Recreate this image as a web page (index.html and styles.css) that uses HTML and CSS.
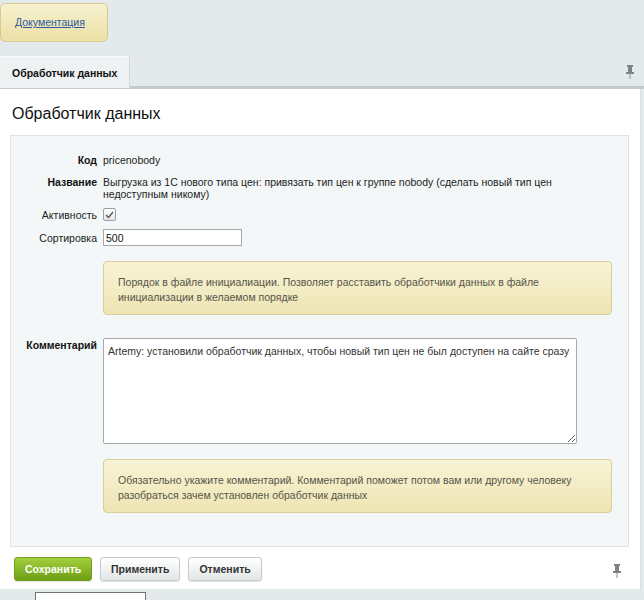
FILE: index.html
```html
<!DOCTYPE html>
<html lang="ru">
<head>
    <meta charset="UTF-8">
    <title>Обработчик данных</title>
    <link rel="stylesheet" href="styles.css">
</head>
<body>

    <div class="top-bar">
        <div class="doc-btn"><a href="#">Документация</a></div>
    </div>

    <div class="tabs">
        <div class="tab">Обработчик данных</div>
        <span class="pin">
            <svg width="10" height="14" viewBox="0 0 10 14"><path d="M2 0h6v2H7v5h2v2H1V7h2V2H2z" fill="#7d8487"/><rect x="4.5" y="9" width="1" height="5" fill="#8d9497"/></svg>
        </span>
    </div>

    <div class="panel">
        <h2 class="panel-title">Обработчик данных</h2>

        <div class="edit-box">
            <div class="row row-code">
                <div class="label">Код</div>
                <div class="value">pricenobody</div>
            </div>
            <div class="row row-name">
                <div class="label">Название</div>
                <div class="value">Выгрузка из 1С нового типа цен: привязать тип цен к группе nobody (сделать новый тип цен недоступным никому)</div>
            </div>
            <div class="row row-active">
                <div class="label normal">Активность</div>
                <div class="value"><span class="check">
                    <svg width="9" height="8" viewBox="0 0 9 8"><path d="M1 4l2.5 2.5L8 1" fill="none" stroke="#555" stroke-width="1.3"/></svg>
                </span></div>
            </div>
            <div class="row row-sort">
                <div class="label normal">Сортировка</div>
                <div class="value"><input type="text" class="sort-input" value="500"></div>
            </div>
            <div class="row row-hint">
                <div></div>
                <div class="hint">Порядок в файле инициалиации. Позволяет расставить обработчики данных в файле инициализации в желаемом порядке</div>
            </div>
            <div class="row row-comment">
                <div class="label">Комментарий</div>
                <div class="value"><textarea class="comment">Artemy: установили обработчик данных, чтобы новый тип цен не был доступен на сайте сразу</textarea></div>
            </div>
            <div class="row row-hint2">
                <div></div>
                <div class="hint">Обязательно укажите комментарий. Комментарий поможет потом вам или другому человеку разобраться зачем установлен обработчик данных</div>
            </div>
        </div>

        <div class="buttons">
            <button class="btn btn-save">Сохранить</button>
            <button class="btn">Применить</button>
            <button class="btn">Отменить</button>
            <span class="pin pin-bottom">
                <svg width="10" height="14" viewBox="0 0 10 14"><path d="M2 0h6v2H7v5h2v2H1V7h2V2H2z" fill="#7d8487"/><rect x="4.5" y="9" width="1" height="5" fill="#8d9497"/></svg>
            </span>
        </div>
    </div>

    <div class="bottom-bar">
        <div class="mini-select"></div>
    </div>

</body>
</html>
```

FILE: styles.css
```css
* {
    box-sizing: border-box;
}

body {
    margin: 0;
    background-color: #e4eaec;
    font-family: "Liberation Sans", Arial, sans-serif;
    font-size: 10.5px;
    color: #222;
    overflow: hidden;
}

.top-bar {
    height: 57px;
    padding-top: 3px;
}

.doc-btn {
    width: 108px;
    height: 39px;
    border: 1px solid #d6cb93;
    border-radius: 5px;
    background: linear-gradient(#f7f1cf, #ece0a6);
    padding: 12px 0 0 14px;
}

.doc-btn a {
    color: #2c5aa0;
    font-size: 10.5px;
}

.tabs {
    display: flex;
    align-items: center;
    justify-content: space-between;
    height: 32px;
    border-bottom: 3px solid #c5cbcd;
}

.tab {
    height: 32px;
    width: 130px;
    background-color: #eef2f3;
    border-right: 1px solid #d3d9db;
    border-top: 1px solid #f6f8f9;
    padding: 10px 0 0 12px;
    font-weight: bold;
    font-size: 10.5px;
    color: #111;
}

.pin {
    display: flex;
    margin-right: 9px;
}

.panel {
    background-color: #fff;
    margin-right: 3px;
    border-right: 1px solid #d9dfe1;
    padding: 16px 0 8px 0;
}

.panel-title {
    margin: 0 0 0 12px;
    font-size: 16px;
    font-weight: normal;
    color: #111;
    line-height: 18px;
}

.edit-box {
    margin: 12px 11px 0 10px;
    background-color: #f4f7f8;
    border: 1px solid #dde2e4;
    padding: 18px 0 33px 0;
}

.row {
    display: grid;
    grid-template-columns: 86px 1fr;
    column-gap: 6px;
    line-height: 12px;
}

.label {
    text-align: right;
    font-weight: bold;
    color: #111;
}

.label.normal {
    font-weight: normal;
    color: #222;
}

.value {
    color: #222;
    padding-right: 60px;
}

.row-name {
    margin-top: 10px;
}

.row-active {
    margin-top: 8px;
    align-items: center;
}

.check {
    display: flex;
    align-items: center;
    justify-content: center;
    width: 13px;
    height: 13px;
    border: 1px solid #9aa0a3;
    border-radius: 2px;
    background: linear-gradient(#fff, #e3e6e8);
}

.row-sort {
    margin-top: 8px;
    align-items: center;
}

.sort-input {
    display: block;
    width: 139px;
    height: 17px;
    border: 1px solid #a5a9ab;
    font-family: "Liberation Sans", Arial, sans-serif;
    font-size: 10.5px;
    color: #111;
    padding: 1px 2px;
    margin: 0;
}

.hint {
    margin-right: 16px;
    border: 1px solid #d8ce9d;
    border-radius: 4px;
    background: linear-gradient(#f8f3d5, #eee5b4);
    color: #55554a;
    line-height: 15px;
    padding: 13px 14px 9px 14px;
}

.row-hint {
    margin-top: 15px;
}

.row-comment {
    margin-top: 23px;
}

.row-comment .label {
    padding-top: 1px;
}

.comment {
    display: block;
    width: 474px;
    height: 106px;
    border: 1px solid #a5a9ab;
    border-radius: 2px;
    font-family: "Liberation Sans", Arial, sans-serif;
    font-size: 10.5px;
    color: #333;
    padding: 6px 2px 4px 4px;
    resize: both;
    margin: 0;
}

.row-hint2 {
    margin-top: 15px;
}

.buttons {
    display: flex;
    align-items: center;
    gap: 8px;
    margin: 10px 0 0 14px;
}

.btn {
    height: 24px;
    padding: 0 10px;
    border: 1px solid #c5cacc;
    border-radius: 3px;
    background: linear-gradient(#ffffff, #e2e6e7);
    font-family: "Liberation Sans", Arial, sans-serif;
    font-weight: bold;
    font-size: 10.5px;
    color: #333;
    box-shadow: 0 1px 1px rgba(0, 0, 0, 0.12);
}

.btn-save {
    width: 78px;
    border-color: #72a01c;
    background: linear-gradient(#a3cf3e, #6d9f14);
    color: #fff;
}

.pin-bottom {
    margin-left: auto;
    margin-right: 18px;
    margin-top: 4px;
}

.bottom-bar {
    height: 20px;
    padding-top: 3px;
}

.mini-select {
    margin-left: 35px;
    width: 111px;
    height: 20px;
    border: 1px solid #6e7477;
    background-color: #fff;
}
```
